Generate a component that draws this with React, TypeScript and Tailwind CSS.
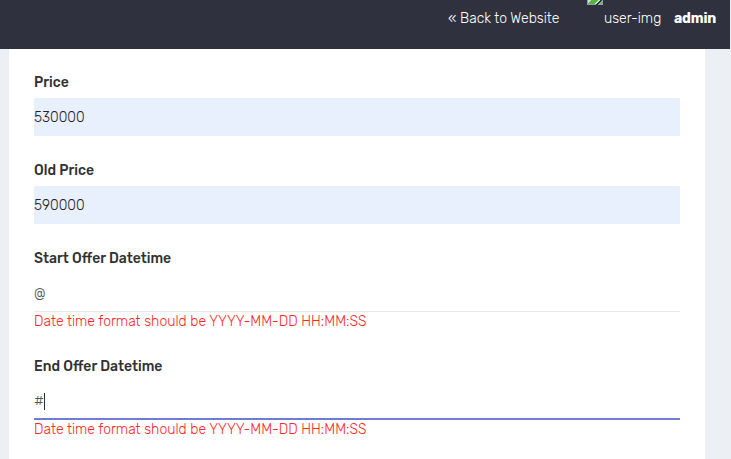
import React from "react";

type FieldProps = {
  label: string;
  children: React.ReactNode;
  error?: boolean;
};

function Field({ label, children, error }: FieldProps) {
  return (
    <div className={error ? "h-[108px]" : "h-[88px]"}>
      <label className="block h-6 text-[14px] leading-[17px] font-medium text-[#313131]">
        {label}
      </label>
      {children}
      {error && (
        <p className="h-5 whitespace-nowrap text-[14px] leading-[20px] font-light text-[#ff2626]">
          Date time format should be YYYY-MM-DD HH:MM:SS
        </p>
      )}
    </div>
  );
}

function BrokenImage() {
  return (
    <svg width="16" height="5" viewBox="0 0 16 5" className="block" shapeRendering="crispEdges">
      <path d="M0 0h16v5H0z" fill="#9b9da1" />
      <path d="M1 0h14v4H1z" fill="#c9dcf5" />
      <path d="M1 4V3l3-3h8L7 4z" fill="#54b735" />
      <path d="M8 5l6-5h1l-5 5z" fill="#2f323e" />
      <path d="M11 4l4-4v4z" fill="#6bbb58" />
    </svg>
  );
}

export default function App() {
  return (
    <div className="h-[459px] w-[731px] overflow-hidden bg-[#ecf0f5] font-[Rubik,Roboto,sans-serif]">
      <header className="flex h-[49px] w-[730px] justify-end bg-[#2f323e] pr-[14px] text-[14px] leading-[37px] whitespace-nowrap text-white">
        <a className="w-[139px] font-light">« Back to Website</a>
        <div className="flex w-[87px]">
          <BrokenImage />
          <span className="pl-px font-light">user-img</span>
        </div>
        <b className="w-[42px] font-bold tracking-[-0.15px]">admin</b>
      </header>
      <main className="ml-[9px] h-[410px] w-[696px] bg-white px-[25px] pt-[25px]">
        <Field label="Price">
          <div className="h-[38px] bg-[#e8f0fe] text-[14px] leading-[39px] font-light text-[#222222]">530000</div>
        </Field>
        <Field label="Old Price">
          <div className="h-[38px] bg-[#e8f0fe] text-[14px] leading-[39px] font-light text-[#222222]">590000</div>
        </Field>
        <Field label="Start Offer Datetime" error>
          <div className="h-[38px] border-b border-[#e9e9e9] text-[14px] leading-[39px] font-light text-[#565656]">@</div>
        </Field>
        <Field label="End Offer Datetime" error>
          <div className="flex h-[38px] items-center border-b-2 border-[#707cd2] text-[14px] font-light text-[#565656]">
            <span className="w-[10px] pt-[2px]">#</span>
            <span className="mt-[2px] h-[17px] w-px bg-[#313131]" />
          </div>
        </Field>
      </main>
    </div>
  );
}
